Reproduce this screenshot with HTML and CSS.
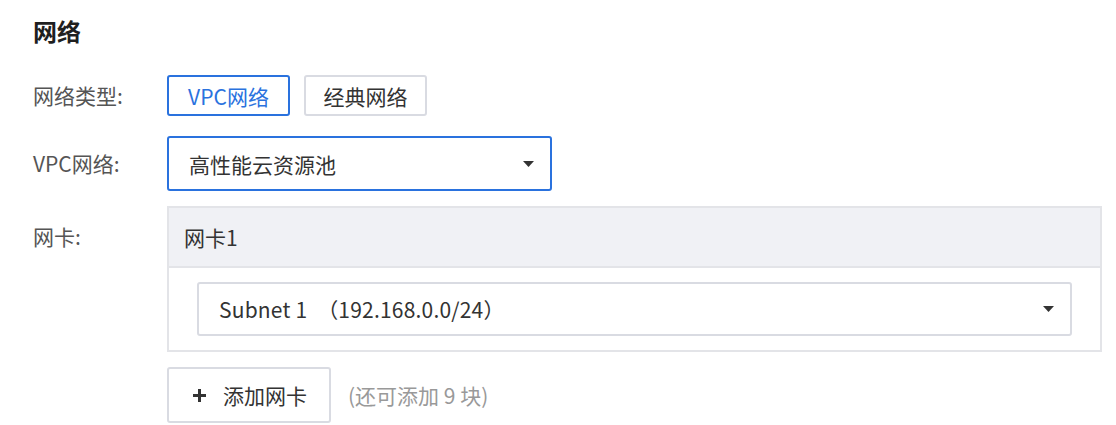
FILE: index.html
```html
<!DOCTYPE html>
<html lang="zh-CN">
<head>
  <meta charset="UTF-8" />
  <meta name="viewport" content="width=device-width, initial-scale=1" />
  <title>网络</title>
  <link rel="stylesheet" href="styles.css">
</head>
<body>
  <div class="page">
    <h3 class="section-title">网络</h3>

    <div class="form-row">
      <div class="form-label row-type">网络类型:</div>
      <div class="radio-group">
        <button class="radio-btn active">VPC网络</button>
        <button class="radio-btn">经典网络</button>
      </div>
    </div>

    <div class="form-row">
      <div class="form-label row-vpc">VPC网络:</div>
      <div class="select select-vpc">
        <span>高性能云资源池</span>
        <svg class="caret" width="11" height="6" viewBox="0 0 11 6"><polygon points="0,0 11,0 5.5,6" /></svg>
      </div>
    </div>

    <div class="form-row">
      <div class="form-label row-nic">网卡:</div>
      <div class="nic-card">
        <div class="nic-header">网卡1</div>
        <div class="nic-body">
          <div class="select select-subnet">
            <span class="subnet-text">Subnet 1  （192.168.0.0/24）</span>
            <svg class="caret" width="11" height="6" viewBox="0 0 11 6"><polygon points="0,0 11,0 5.5,6" /></svg>
          </div>
        </div>
      </div>
    </div>

    <div class="form-row">
      <div class="form-label"></div>
      <div class="add-line">
        <button class="add-btn">
          <svg width="13" height="13" viewBox="0 0 13 13"><path d="M5 0h3v13H5z M0 5h13v3H0z" /></svg>
          <span>添加网卡</span>
        </button>
        <span class="hint">(还可添加 9 块)</span>
      </div>
    </div>
  </div>
</body>
</html>
```

FILE: styles.css
```css
* {
  box-sizing: border-box;
}
body {
  margin: 0;
  background: #fff;
  font-family: "Noto Sans CJK SC", "Noto Sans", sans-serif;
  font-size: 21px;
  color: #333;
}
.page {
  padding: 13px 14px 0 33px;
}
.section-title {
  margin: 0 0 26px;
  font-size: 24px;
  line-height: 36px;
  font-weight: 700;
  color: #1f1f1f;
}
.form-row {
  display: flex;
  align-items: flex-start;
  margin-bottom: 15px;
}
.form-row:first-of-type {
  margin-bottom: 20px;
}
.form-label {
  flex: 0 0 134px;
  color: #555;
}
.row-type {
  line-height: 41px;
}
.row-vpc {
  line-height: 55px;
}
.row-nic {
  line-height: 60px;
}
.radio-group {
  display: flex;
  gap: 14px;
}
.radio-btn {
  width: 123px;
  height: 41px;
  padding: 0;
  font: inherit;
  color: #333;
  background: #fff;
  border: 2px solid #d9dbe2;
  border-radius: 3px;
  cursor: pointer;
}
.radio-btn.active {
  color: #2a72de;
  border-color: #2a72de;
}
.select {
  display: flex;
  align-items: center;
  justify-content: space-between;
  background: #fff;
  border: 2px solid #d9dbe2;
  border-radius: 3px;
  padding: 0 16px 0 20px;
  color: #333;
}
.select-vpc {
  width: 385px;
  height: 55px;
  border-color: #2a72de;
}
.select-subnet {
  height: 54px;
}
.subnet-text {
  white-space: pre;
  letter-spacing: 0.2px;
}
.caret {
  fill: #333;
}
.nic-card {
  flex: 1;
  border: 2px solid #e3e4e8;
}
.nic-header {
  height: 60px;
  display: flex;
  align-items: center;
  padding: 0 15px;
  background: #f0f1f5;
  border-bottom: 2px solid #e3e4e8;
  color: #333;
}
.nic-body {
  padding: 14px 28px;
}
.add-line {
  display: flex;
  align-items: center;
}
.add-btn {
  display: flex;
  align-items: center;
  gap: 17px;
  height: 56px;
  padding: 0 22px 0 24px;
  font: inherit;
  color: #333;
  background: #fff;
  border: 2px solid #d9dbe2;
  border-radius: 3px;
  cursor: pointer;
}
.add-btn svg {
  fill: #333;
}
.hint {
  margin-left: 17px;
  color: #999;
}
```
